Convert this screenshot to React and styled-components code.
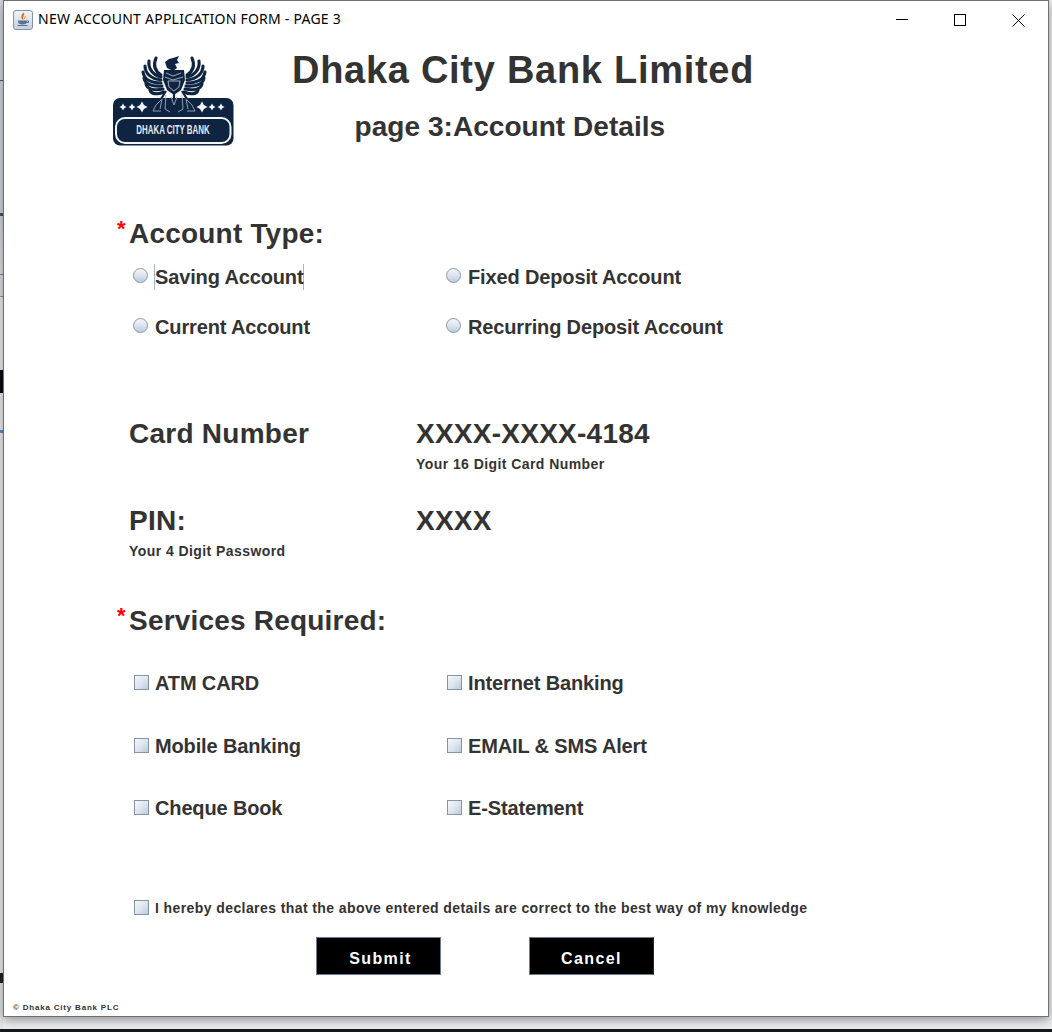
import styled, { createGlobalStyle } from 'styled-components';

const GlobalStyle = createGlobalStyle`
	html, body {
		margin: 0;
		padding: 0;
		background: #e4e6ea;
	}
	body {
		font-family: 'Liberation Sans', Arial, sans-serif;
		color: #333333;
	}
`;

const accountTypes = [
	'Saving Account',
	'Fixed Deposit Account',
	'Current Account',
	'Recurring Deposit Account',
];

const services = [
	'ATM CARD',
	'Internet Banking',
	'Mobile Banking',
	'EMAIL & SMS Alert',
	'Cheque Book',
	'E-Statement',
];

const NAVY = '#0e2440';

const feathers = [
	'M48 22 C42 18 40 12 43 5',
	'M48 24 C40 22 35 16 36 8',
	'M48 27 C39 26 32 21 32 13',
	'M48 30 C38 30 31 26 30 19',
	'M49 33 C39 34 32 31 31 25',
	'M50 36 C41 38 34 36 33 31',
	'M51 39 C44 42 38 41 37 37',
];

const Wing = ({ mirrored }) => (
	<g
		fill='none'
		stroke={NAVY}
		strokeWidth='3.1'
		strokeLinecap='round'
		transform={mirrored ? 'translate(122 0) scale(-1 1)' : undefined}
	>
		{feathers.map((d) => (
			<path key={d} d={d} />
		))}
	</g>
);

const Star = ({ x, r }) => (
	<path
		d={`M${x} ${54 - r} L${x + r * 0.35} ${54 - r * 0.35} L${x + r} 54 L${x + r * 0.35} ${54 + r * 0.35} L${x} ${54 + r} L${x - r * 0.35} ${54 + r * 0.35} L${x - r} 54 L${x - r * 0.35} ${54 - r * 0.35} Z`}
	/>
);

const Logo = () => (
	<svg width='122' height='94' viewBox='0 0 122 94'>
		<rect x='0' y='45' width='120.5' height='47.5' rx='7' fill={NAVY} />
		<Wing />
		<Wing mirrored />
		{/* head and crest */}
		<path d='M52 9 L56 6 L60 5 L66 3 L64 7 L66 10 L62 11 L64 15 L60 18 L54 15 Z' fill={NAVY} />
		{/* chest */}
		<path d='M51 17 L71 17 L72 27 L68 37 L61 42 L54 37 L50 27 Z' fill={NAVY} />
		<g fill='none' stroke='#dfe5ec' strokeWidth='0.7'>
			<path d='M53 20 L60 23 L68 20 M52 24 L60 27 L70 24' />
			<path d='M55 28 L67 28 L66 34 L61 38 L56 34 Z' />
		</g>
		{/* legs and claws, pale over the banner */}
		<g fill='none' stroke='#9dabbc' strokeWidth='0.9'>
			<path d='M53 38 L49 46 L43 52 L40 58 M49 46 L47 56 M53 42 L52 56 L57 59' />
			<path d='M69 38 L73 46 L79 52 L82 58 M73 46 L75 56 M69 42 L70 56 L65 59' />
			<path d='M40 58 L48 58 M74 58 L82 58 M58 44 L61 52 L64 44' />
		</g>
		<path d='M53 38 L48 46 M69 38 L74 46 M61 41 L61 45' stroke={NAVY} strokeWidth='2.2' fill='none' />
		<g fill='#f2f4f7'>
			<Star x={10} r={3.5} />
			<Star x={19} r={3.5} />
			<Star x={29} r={5.5} />
			<Star x={89} r={5.5} />
			<Star x={99} r={3.5} />
			<Star x={108} r={3.5} />
		</g>
		<rect x='3' y='65' width='114.5' height='25' rx='9' fill='none' stroke='#f2f4f7' strokeWidth='2' />
		<text
			transform='translate(60 81) scale(0.66 1)'
			textAnchor='middle'
			fontFamily="'Liberation Sans', Arial, sans-serif"
			fontWeight='700'
			fontSize='12'
			fill='#e6eaef'
		>
			DHAKA CITY BANK
		</text>
	</svg>
);

const JavaIcon = () => (
	<svg width='20' height='20' viewBox='0 0 20 20'>
		<defs>
			<linearGradient id='javaBg' x1='0' y1='0' x2='0' y2='1'>
				<stop offset='0' stopColor='#f2f5f9' />
				<stop offset='1' stopColor='#c3cfdd' />
			</linearGradient>
		</defs>
		<rect x='0.5' y='0.5' width='19' height='19' rx='2.5' fill='url(#javaBg)' stroke='#8494a8' />
		<path d='M10.5 2.5 C13 5 8.5 6.5 10.5 10 C8 9 7 6 10.5 2.5 Z' fill='#e2711d' />
		<path d='M12.5 5.5 C13.5 7.5 11 8 12 10 C10.5 9 10.5 7 12.5 5.5 Z' fill='#ee9a4d' />
		<path d='M5 10.5 H14 V11.5 C14 13.5 12.5 14.5 9.5 14.5 C6.5 14.5 5 13.5 5 11.5 Z' fill='#5a7390' />
		<path d='M14 11 H15.5 V12.5 H13.5' fill='none' stroke='#5a7390' />
		<path d='M4.5 15.5 H14.5' stroke='#5a7390' strokeWidth='1' />
	</svg>
);

const App = () => (
	<>
		<GlobalStyle />
		<Desktop>
			<Window>
				<TitleBar>
					<TitleLeft>
						<JavaIcon />
						<TitleText>NEW ACCOUNT APPLICATION FORM - PAGE 3</TitleText>
					</TitleLeft>
					<WindowControls>
						<ControlButton>
							<svg width='12' height='12' viewBox='0 0 12 12'>
								<path d='M0 5.5 H12' stroke='#000' strokeWidth='1' />
							</svg>
						</ControlButton>
						<ControlButton>
							<svg width='12' height='12' viewBox='0 0 12 12'>
								<rect x='0.5' y='0.5' width='11' height='11' fill='none' stroke='#000' />
							</svg>
						</ControlButton>
						<ControlButton>
							<svg width='13' height='13' viewBox='0 0 13 13'>
								<path d='M0.5 0.5 L12.5 12.5 M12.5 0.5 L0.5 12.5' stroke='#000' strokeWidth='1' />
							</svg>
						</ControlButton>
					</WindowControls>
				</TitleBar>

				<Header>
					<LogoWrap>
						<Logo />
					</LogoWrap>
					<Titles>
						<BankName>Dhaka City Bank Limited</BankName>
						<PageTitle>page 3:Account Details</PageTitle>
					</Titles>
				</Header>

				<Form>
					<SectionHeading $top={69}>
						<Required>*</Required>
						Account Type:
					</SectionHeading>
					<RadioGrid>
						{accountTypes.map((type) => (
							<Option key={type}>
								<Radio />
								<OptionLabel $focused={type === 'Saving Account'}>{type}</OptionLabel>
							</Option>
						))}
					</RadioGrid>

					<DetailsGrid>
						<DetailHeading>Card Number</DetailHeading>
						<DetailHeading>XXXX-XXXX-4184</DetailHeading>
						<span />
						<Hint>Your 16 Digit Card Number</Hint>
						<DetailHeading $spaced>PIN:</DetailHeading>
						<DetailHeading $spaced>XXXX</DetailHeading>
						<Hint>Your 4 Digit Password</Hint>
					</DetailsGrid>

					<SectionHeading $top={43}>
						<Required>*</Required>
						Services Required:
					</SectionHeading>
					<CheckGrid>
						{services.map((service) => (
							<Option key={service}>
								<Checkbox />
								<OptionLabel>{service}</OptionLabel>
							</Option>
						))}
					</CheckGrid>

					<Declaration>
						<Checkbox />
						<DeclarationText>
							I hereby declares that the above entered details are correct to the best way of my knowledge
						</DeclarationText>
					</Declaration>

					<Buttons>
						<ActionButton type='button' $nudge={4}>
							Submit
						</ActionButton>
						<ActionButton type='button' $dark>
							Cancel
						</ActionButton>
					</Buttons>
				</Form>

				<Footer>© Dhaka City Bank PLC</Footer>
			</Window>
			<Taskbar />
		</Desktop>
	</>
);

// the other windows behind this one only show as a few marks along the left edge
const Desktop = styled.div`
	width: 1052px;
	height: 1032px;
	padding: 0 0 0 3px;
	box-sizing: border-box;
	display: flex;
	flex-direction: column;
	overflow: hidden;
	background-color: #eceef1;
	background-repeat: no-repeat;
	background-size: 3px 100%;
	background-image: linear-gradient(
		to bottom,
		#d4d8e0 0,
		#d4d8e0 80px,
		#3f5f8a 80px,
		#3f5f8a 81px,
		#d4d8e0 81px,
		#d4d8e0 213px,
		#555555 213px,
		#555555 216px,
		#d4d8e0 216px,
		#e2e3e6 274px,
		#888888 274px,
		#888888 275px,
		#e2e3e6 275px,
		#e2e3e6 296px,
		#999999 296px,
		#999999 297px,
		#f0f0f0 297px,
		#f0f0f0 370px,
		#0a0a14 370px,
		#0a0a14 393px,
		#f0f0f0 393px,
		#f0f0f0 430px,
		#5f8fd0 430px,
		#5f8fd0 433px,
		#f0f0f0 433px,
		#f0f0f0 973px,
		#222222 973px,
		#222222 983px,
		#e6e6e6 983px
	);
`;

const Window = styled.div`
	width: 1046px;
	height: 1017px;
	box-sizing: border-box;
	border: 1px solid #6e7072;
	background: #ffffff;
	box-shadow: 0 3px 10px rgba(0, 0, 0, 0.4);
	flex: none;
	position: relative;
	z-index: 1;
`;

const TitleBar = styled.div`
	height: 38px;
	display: flex;
	align-items: center;
	justify-content: space-between;
	padding: 0 0 0 9px;
`;

const TitleLeft = styled.div`
	display: flex;
	align-items: center;
	gap: 5px;
`;

const TitleText = styled.span`
	font-family: 'Noto Sans', 'Open Sans', sans-serif;
	font-size: 14px;
	line-height: 20px;
	letter-spacing: 0.24px;
	margin-bottom: 2px;
	color: #000000;
	white-space: nowrap;
`;

const WindowControls = styled.div`
	display: flex;
`;

const ControlButton = styled.div`
	width: 58.5px;
	height: 38px;
	display: flex;
	align-items: center;
	justify-content: center;
`;

const Header = styled.header`
	display: flex;
	padding: 9px 0 0 109px;
`;

const LogoWrap = styled.div`
	width: 122px;
	height: 94px;
	margin-top: 5px;
`;

const Titles = styled.div`
	display: flex;
	flex-direction: column;
`;

const BankName = styled.h1`
	margin: 0 0 0 57px;
	font-size: 38px;
	line-height: 44px;
	font-weight: 700;
	color: #333333;
	letter-spacing: 0.72px;
	white-space: nowrap;
`;

const PageTitle = styled.h2`
	margin: 17px 0 0 119.5px;
	font-size: 28px;
	line-height: 36px;
	font-weight: 700;
	color: #333333;
	letter-spacing: 0.05px;
	white-space: nowrap;
`;

const Form = styled.form`
	padding-left: 125px;
`;

const SectionHeading = styled.h3`
	position: relative;
	margin: ${(props) => props.$top}px 0 0;
	font-size: 28px;
	line-height: 36px;
	font-weight: 700;
	letter-spacing: 0.2px;
	color: #333333;
`;

const Required = styled.span`
	position: absolute;
	left: -12px;
	top: 1px;
	font-size: 22px;
	line-height: 24px;
	font-weight: 700;
	letter-spacing: 0;
	color: #ff0000;
`;

const RadioGrid = styled.div`
	display: grid;
	grid-template-columns: 313px 1fr;
	grid-auto-rows: 30px;
	row-gap: 20px;
	margin: 10px 0 0 3px;
`;

const CheckGrid = styled(RadioGrid)`
	row-gap: 32.5px;
	margin-top: 29px;
`;

const Option = styled.label`
	display: flex;
	align-items: center;
	height: 30px;
`;

const Radio = styled.span`
	width: 15px;
	height: 15px;
	box-sizing: border-box;
	margin: -4px 7px 0 1px;
	border: 1px solid #8a98a8;
	border-radius: 50%;
	background: linear-gradient(to bottom, #f3f6f9 0%, #dfe6ef 45%, #bccbdc 100%);
	flex: none;
`;

const Checkbox = styled.span`
	width: 15px;
	height: 15px;
	box-sizing: border-box;
	margin: -1px 6px 0 2px;
	border: 1px solid #8595a6;
	background: linear-gradient(135deg, #f6f8fb 0%, #dfe6ef 50%, #bccbdc 100%);
	flex: none;
`;

const OptionLabel = styled.span`
	font-size: 20px;
	line-height: 26px;
	font-weight: 700;
	letter-spacing: -0.14px;
	color: #333333;
	white-space: nowrap;
	${(props) =>
		props.$focused &&
		`
		box-shadow: -1px 0 0 #a3b8cc, 1px 0 0 #a3b8cc;
	`}
`;

const DetailsGrid = styled.div`
	display: grid;
	grid-template-columns: 287px 1fr;
	margin-top: 74px;
`;

const DetailHeading = styled.div`
	font-size: 28px;
	line-height: 36px;
	font-weight: 700;
	letter-spacing: 0.25px;
	color: #333333;
	margin-top: ${(props) => (props.$spaced ? '30px' : '0')};
`;

const Hint = styled.div`
	margin-top: 3px;
	font-size: 14px;
	line-height: 18px;
	font-weight: 700;
	letter-spacing: 0.43px;
	color: #333333;
`;

const Declaration = styled.label`
	display: flex;
	align-items: center;
	height: 20px;
	margin: 75px 0 0 3px;
`;

const DeclarationText = styled.span`
	font-size: 14px;
	line-height: 20px;
	font-weight: 700;
	letter-spacing: 0.41px;
	color: #333333;
	white-space: nowrap;
`;

const Buttons = styled.div`
	display: flex;
	gap: 88px;
	margin: 19px 0 0 187px;
`;

const ActionButton = styled.button`
	width: 125px;
	height: 38px;
	padding: 5px 0 0 ${(props) => props.$nudge || 0}px;
	box-sizing: border-box;
	border: 1px solid #6b7d92;
	border-right-color: ${(props) => (props.$dark ? '#1b2733' : '#6b7d92')};
	background: #000000;
	color: #ffffff;
	font-family: 'Liberation Sans', Arial, sans-serif;
	font-size: 16px;
	font-weight: 700;
	letter-spacing: 1.4px;
`;

const Footer = styled.footer`
	margin: 27px 0 0 9px;
	font-size: 8px;
	line-height: 12px;
	font-weight: 700;
	letter-spacing: 0.8px;
	color: #333333;
`;

const Taskbar = styled.div`
	height: 3px;
	margin: 12px 0 0 -3px;
	background: #15181c;
	flex: none;
`;

export default App;
